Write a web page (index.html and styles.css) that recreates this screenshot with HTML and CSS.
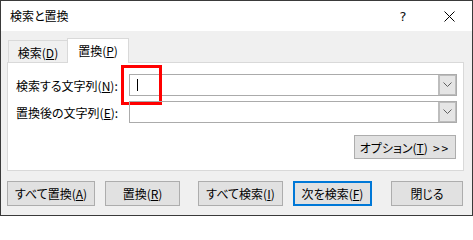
FILE: index.html
```html
<!DOCTYPE html>
<html lang="ja">
<head>
<meta charset="utf-8">
<title>検索と置換</title>
<link rel="stylesheet" href="styles.css">
</head>
<body>
<div class="window">
  <div class="titlebar">
    <div class="title">検索と置換</div>
    <div class="tb-btn help">?</div>
    <div class="tb-btn close">
      <svg width="11" height="11" viewBox="0 0 11 11"><path d="M0.5 0.5 L10.5 10.5 M10.5 0.5 L0.5 10.5" stroke="#000" stroke-width="1" fill="none"/></svg>
    </div>
  </div>
  <div class="tabs">
    <div class="tab">検索(<u>D</u>)</div>
    <div class="tab active">置換(<u>P</u>)</div>
  </div>
  <div class="panel">
    <div class="row">
      <div class="label">検索する文字列(<u>N</u>):</div>
      <div class="combo">
        <div class="caret"></div>
        <div class="drop"><svg width="9" height="6" viewBox="0 0 9 6"><path d="M0.5 0.5 L4.5 4.5 L8.5 0.5" stroke="#606060" stroke-width="1" fill="none"/></svg></div>
        <div class="highlight"></div>
      </div>
    </div>
    <div class="row second">
      <div class="label">置換後の文字列(<u>E</u>):</div>
      <div class="combo">
        <div class="drop"><svg width="9" height="6" viewBox="0 0 9 6"><path d="M0.5 0.5 L4.5 4.5 L8.5 0.5" stroke="#606060" stroke-width="1" fill="none"/></svg></div>
      </div>
    </div>
    <div class="opt-row">
      <div class="btn options">オプション(<u>T</u>)<span class="arrows">&gt;&gt;</span></div>
    </div>
  </div>
  <div class="buttons">
    <div class="btn b1">すべて置換(<u>A</u>)</div>
    <div class="btn b2">置換(<u>R</u>)</div>
    <div class="btn b3">すべて検索(<u>I</u>)</div>
    <div class="btn b4 default">次を検索(<u>F</u>)</div>
    <div class="btn b5">閉じる</div>
  </div>
</div>
</body>
</html>
```

FILE: styles.css
```css
html, body {
  margin: 0;
  padding: 0;
  background: #ffffff;
}
body {
  font-family: "Noto Sans CJK JP", "Noto Sans", sans-serif;
  font-size: 12px;
  font-feature-settings: "palt";
  color: #000;
}
.window {
  box-sizing: border-box;
  width: 473px;
  height: 216px;
  border: 1px solid #3a3a3a;
  background: #f0f0f0;
  display: flex;
  flex-direction: column;
}
.titlebar {
  height: 30px;
  background: #ffffff;
  display: flex;
  align-items: center;
}
.title {
  flex: 1;
  padding-left: 9px;
  line-height: 30px;
}
.tb-btn {
  width: 46px;
  height: 30px;
  display: flex;
  align-items: center;
  justify-content: center;
}
.help {
  font-family: "DejaVu Sans", sans-serif;
  font-size: 13px;
  font-weight: normal;
  color: #111;
}
.close svg {
  display: block;
}
.tabs {
  margin-top: 7px;
  height: 24px;
  padding-left: 7px;
  display: flex;
  align-items: flex-end;
}
.tab {
  box-sizing: border-box;
  width: 60px;
  height: 22px;
  border: 1px solid #d9d9d9;
  border-bottom: none;
  background: #f0f0f0;
  display: flex;
  align-items: center;
  justify-content: center;
  padding-top: 1px;
}
.tab.active {
  position: relative;
  z-index: 1;
  width: 62px;
  height: 25px;
  margin-left: -1px;
  margin-bottom: -1px;
  background: #ffffff;
  padding-top: 0;
  padding-bottom: 2px;
}
.panel {
  box-sizing: border-box;
  margin: 0 8px 0 6px;
  height: 109px;
  border: 1px solid #d9d9d9;
  background: #ffffff;
  padding: 11px 6px 11px 8px;
  display: flex;
  flex-direction: column;
}
.row {
  display: flex;
  align-items: center;
  height: 22px;
}
.row.second {
  margin-top: 5px;
}
.label {
  width: 113px;
  white-space: nowrap;
}
.combo {
  position: relative;
  box-sizing: border-box;
  width: 328px;
  height: 22px;
  border: 1px solid #ababab;
  display: flex;
  align-items: center;
}
.caret {
  width: 1px;
  height: 12px;
  background: #000;
  margin-left: 7px;
}
.drop {
  box-sizing: border-box;
  margin-left: auto;
  width: 18px;
  height: 20px;
  border: 1px solid #bdbdbd;
  border-left-width: 2px;
  background: #e5e5e5;
  display: flex;
  align-items: center;
  justify-content: center;
}
.drop svg {
  display: block;
}
.highlight {
  position: absolute;
  left: -9px;
  top: -10px;
  width: 41px;
  height: 40px;
  box-sizing: border-box;
  border: 3px solid #ff0000;
}
.opt-row {
  margin-top: 12px;
  display: flex;
  justify-content: flex-end;
  padding-right: 1px;
}
.btn {
  box-sizing: border-box;
  height: 24px;
  border: 1px solid #adadad;
  background: #e1e1e1;
  display: flex;
  align-items: center;
  justify-content: center;
  white-space: nowrap;
}
.options {
  width: 102px;
}
.arrows {
  margin-left: 5px;
  letter-spacing: 2px;
}
.buttons {
  margin-top: 10px;
  padding-left: 6px;
  display: flex;
}
.buttons .btn {
  height: 25px;
}
.b1 { width: 88px; }
.b2 { width: 75px; margin-left: 10px; }
.b3 { width: 85px; margin-left: 18px; }
.b4 { width: 79px; margin-left: 10px; }
.b5 { width: 72px; margin-left: 19px; }
.btn.default {
  border: 2px solid #0078d7;
}
```
